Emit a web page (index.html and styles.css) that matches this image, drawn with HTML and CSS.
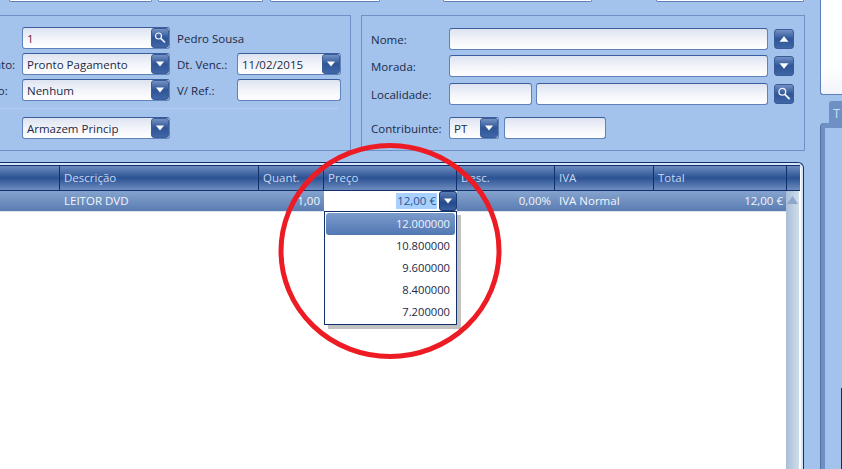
FILE: index.html
```html
<!DOCTYPE html>
<html lang="pt">
<head>
    <meta charset="UTF-8">
    <title>Documento de venda</title>
    <link rel="stylesheet" href="styles.css">
</head>
<body>
<div id="app">
    <div class="main">
        <div class="toolbar">
            <span class="tool t1"></span>
            <span class="tool t2"></span>
            <span class="tool t3"></span>
            <span class="tool t4"></span>
            <span class="tool t5"></span>
        </div>

        <div class="panels">
            <div class="panel panel-doc">
                <div class="doc-grid">
                    <span class="lbl"></span>
                    <div class="field"><span class="val val-id">1</span><span class="btn"><svg viewBox="0 0 16 16"><use href="#i-search"/></svg></span></div>
                    <span class="lbl lbl-name">Pedro Sousa</span>

                    <span class="lbl lbl-pay">Pagamento:</span>
                    <div class="field"><span class="val">Pronto Pagamento</span><span class="btn"><svg viewBox="0 0 16 16"><use href="#i-down"/></svg></span></div>
                    <span class="lbl lbl-mid">Dt. Venc.:</span>
                    <div class="field"><span class="val">11/02/2015</span><span class="btn"><svg viewBox="0 0 16 16"><use href="#i-down"/></svg></span></div>

                    <span class="lbl">Desconto:</span>
                    <div class="field"><span class="val">Nenhum</span><span class="btn"><svg viewBox="0 0 16 16"><use href="#i-down"/></svg></span></div>
                    <span class="lbl lbl-mid">V/ Ref.:</span>
                    <div class="field"></div>
                </div>
                <div class="sep"></div>
                <div class="doc-grid">
                    <span class="lbl"></span>
                    <div class="field"><span class="val">Armazem Princip</span><span class="btn"><svg viewBox="0 0 16 16"><use href="#i-down"/></svg></span></div>
                </div>
            </div>

            <div class="panel panel-client">
                <div class="client-row">
                    <span class="lbl">Nome:</span>
                    <div class="field grow"></div>
                    <span class="btn btn-side"><svg viewBox="0 0 16 16"><use href="#i-up"/></svg></span>
                </div>
                <div class="client-row">
                    <span class="lbl">Morada:</span>
                    <div class="field grow"></div>
                    <span class="btn btn-side"><svg viewBox="0 0 16 16"><use href="#i-down"/></svg></span>
                </div>
                <div class="client-row row-local">
                    <span class="lbl">Localidade:</span>
                    <div class="field cp"></div>
                    <div class="field grow"></div>
                    <span class="btn btn-side"><svg viewBox="0 0 16 16"><use href="#i-search"/></svg></span>
                </div>
                <div class="client-row row-nif">
                    <span class="lbl">Contribuinte:</span>
                    <div class="field country"><span class="val">PT</span><span class="btn"><svg viewBox="0 0 16 16"><use href="#i-down"/></svg></span></div>
                    <div class="field nif"></div>
                </div>
            </div>
        </div>

        <div class="table">
            <div class="thead cols">
                <div class="th"></div>
                <div class="th">Descrição</div>
                <div class="th">Quant.</div>
                <div class="th">Preço</div>
                <div class="th">Desc.</div>
                <div class="th">IVA</div>
                <div class="th">Total</div>
                <div class="th"></div>
            </div>
            <div class="tbody">
                <div class="rows">
                    <div class="tr cols">
                        <div class="td"></div>
                        <div class="td">LEITOR DVD</div>
                        <div class="td num">1,00</div>
                        <div class="td td-edit">
                            <span class="sel">12,00 €</span>
                            <span class="btn"><svg viewBox="0 0 16 16"><use href="#i-down"/></svg></span>
                            <ul class="dropdown">
                                <li class="on">12.000000</li>
                                <li>10.800000</li>
                                <li>9.600000</li>
                                <li>8.400000</li>
                                <li>7.200000</li>
                            </ul>
                        </div>
                        <div class="td num">0,00%</div>
                        <div class="td">IVA Normal</div>
                        <div class="td num">12,00 €</div>
                    </div>
                </div>
                <div class="scrollbar"><svg viewBox="0 0 13 10"><path d="M6.500 1 L12 9 H1 Z"/></svg></div>
            </div>
        </div>
    </div>

    <div class="side">
        <div class="side-top"></div>
        <div class="tab">T</div>
        <div class="tab-page"><div class="page-edge"></div></div>
    </div>

    <svg class="circle" viewBox="0 0 842 469"><ellipse cx="390" cy="251" rx="109" ry="105.500"/></svg>
</div>

<svg class="defs" width="0" height="0">
    <symbol id="i-down" viewBox="0 0 16 16"><path d="M4 5.500 H12 L8 10.500 Z" fill="#fff"/></symbol>
    <symbol id="i-up" viewBox="0 0 16 16"><path d="M4 10.500 H12 L8 5.500 Z" fill="#fff"/></symbol>
    <symbol id="i-search" viewBox="0 0 16 16"><circle cx="6.500" cy="6" r="3" fill="none" stroke="#eef2fa" stroke-width="1.200"/><path d="M8.800 8.300 L13 12.500" stroke="#eef2fa" stroke-width="1.700"/></symbol>
</svg>
</body>
</html>
```

FILE: styles.css
```css
* {
    margin: 0;
    padding: 0;
    box-sizing: border-box;
}

html, body {
    width: 842px;
    height: 469px;
    overflow: hidden;
}

body {
    background-color: #a3c2ec;
    font-family: "Open Sans", "Noto Sans", sans-serif;
    font-size: 11.5px;
    color: #1c2a47;
}

#app {
    position: relative;
    display: flex;
    width: 842px;
    height: 469px;
    overflow: hidden;
}

.defs {
    position: absolute;
}

.main {
    width: 820px;
    flex: none;
}

/* toolbar, only the bottom of it is in view */
.toolbar {
    display: flex;
    height: 15px;
}

.tool {
    height: 2px;
    background-color: #fff;
    border: 1px solid #5c7fb8;
    border-top: 0;
    border-radius: 0 0 2px 2px;
}

.t1 { width: 143px; margin-left: 9px; }
.t2 { width: 105px; margin-left: 6px; }
.t3 { width: 110px; margin-left: 7px; }
.t4 { width: 149px; margin-left: 63px; }
.t5 { width: 148px; margin-left: 64px; }

.panels {
    display: flex;
    gap: 10px;
    margin-left: -60px;
}

.panel {
    height: 136px;
    border: 1px solid #6d90c6;
}

.panel-doc {
    width: 411px;
    padding: 11px 0 0 13px;
}

.panel-client {
    width: 444px;
    padding: 12px 0 0 9px;
}

.doc-grid {
    display: grid;
    grid-template-columns: 68px 148px 67px 104px;
    grid-auto-rows: 22px;
    row-gap: 4px;
    align-items: center;
}

.lbl-name {
    grid-column: 3 / span 2;
    padding-left: 7px;
}

.lbl-mid {
    padding-left: 7px;
}

.lbl-pay {
    margin-left: -3px;
}

.sep {
    width: 384px;
    height: 1px;
    margin: 7px 0 8px;
    background-color: #b4cdf0;
}

.lbl {
    white-space: nowrap;
}

.field {
    display: flex;
    align-items: center;
    justify-content: space-between;
    height: 22px;
    background: linear-gradient(#dde3f0, #f3f5fa 55%, #fff);
    border: 1px solid #5f82b9;
    border-top-color: #3b5d9b;
    border-radius: 3px;
}

.val {
    padding-left: 4px;
    white-space: nowrap;
}

.val-id {
    color: #6a1f3c;
}

.btn {
    display: block;
    flex: none;
    width: 18px;
    height: 20px;
    background: linear-gradient(#7391c4, #2f5596 50%, #3f66a6);
    border: 1px solid #3a5c98;
    border-radius: 3px;
}

.btn svg {
    display: block;
    width: 100%;
    height: 100%;
}

.client-row {
    display: flex;
    align-items: center;
    margin-bottom: 5px;
}

.row-local {
    margin-top: 6px;
}

.client-row .lbl {
    width: 78px;
    flex: none;
}

.client-row .grow {
    flex: none;
    width: 319px;
}

.client-row .cp {
    width: 83px;
    margin-right: 4px;
}

.client-row .cp + .grow {
    width: 232px;
}

.btn-side {
    width: 20px;
    margin-left: 6px;
}

.row-nif {
    margin-top: 12px;
}

.country {
    width: 50px;
}

.nif {
    width: 102px;
    margin-left: 5px;
}

/* grid of document lines */
.table {
    width: 804px;
    height: 320px;
    margin-top: 11px;
    padding: 2px 3px 0 0;
    background-color: #fff;
    border: 1px solid #12306a;
    border-left: 0;
    border-bottom: 0;
    border-radius: 0 6px 0 0;
    box-shadow: inset -2px 2px 0 #d5e4f8;
}

.cols {
    display: grid;
    grid-template-columns: 60px 199px 65px 133px 98px 99px 133px 13px;
}

.thead {
    height: 26px;
    background: linear-gradient(#6c8cc0, #2c5293 50%, #6d8dc0);
    border-top: 1px solid #12306a;
    border-bottom: 1px solid #12306a;
    color: #c6d9f5;
}

.th {
    padding: 4px 0 0 4px;
    border-right: 1px solid #12306a;
    white-space: nowrap;
}

.th:last-child {
    border-right: 0;
}

.tbody {
    display: flex;
    height: 290px;
}

.rows {
    width: 786px;
    flex: none;
}

.tr {
    height: 21px;
    background: linear-gradient(#84a3ce, #5a7cb2);
    border-bottom: 1px solid #dfe6f1;
    color: #f2f6fd;
}

.td {
    padding: 2px 4px 0 4px;
    white-space: nowrap;
}

.num {
    text-align: right;
}

.td-edit {
    position: relative;
    display: flex;
    justify-content: flex-end;
    align-items: flex-start;
    gap: 2px;
    padding: 0;
    background-color: #fff;
    color: #2a5690;
}

.sel {
    height: 16px;
    margin-top: 2px;
    padding: 0 1px;
    background-color: #a8d1ff;
}

.td-edit .btn {
    width: 18px;
    height: 20px;
    background: linear-gradient(#5b7db5, #25498a 60%, #3a5f9f);
    border-color: #1b3b78;
}

.dropdown {
    position: absolute;
    z-index: 2;
    top: 20px;
    left: 0;
    width: 133px;
    height: 114px;
    list-style: none;
    padding: 1px;
    background-color: #fff;
    border: 1px solid #12306a;
    box-shadow: 4px 4px 0 #c2c2c2;
    color: #1c2a47;
    font-size: 11.2px;
}

.dropdown li {
    height: 22px;
    padding-right: 5px;
    line-height: 22px;
    text-align: right;
}

.dropdown .on {
    background: linear-gradient(#7b9bcc, #5277b3);
    border-radius: 3px;
    color: #eef4fd;
}

.scrollbar {
    width: 13px;
    flex: none;
    background: linear-gradient(90deg, #a9bed8, #cfdde9);
}

.scrollbar svg {
    display: block;
    width: 13px;
    height: 10px;
    margin-top: 4px;
}

.scrollbar path {
    fill: #8ea6ca;
}

/* right hand column */
.side {
    flex: 1;
    min-width: 0;
}

.side-top {
    height: 95px;
    background: linear-gradient(#fff 70%, #f1f4fb);
    border: 1px solid #5c7fb8;
    border-top: 0;
    border-right: 0;
    border-radius: 0 0 0 3px;
}

.tab {
    width: 13px;
    height: 22px;
    margin: 6px 0 0 9px;
    padding: 3px 0 0 4px;
    overflow: hidden;
    background-color: #6f90c4;
    border-radius: 3px 0 0 0;
    color: #bfe0ff;
    font-size: 13px;
}

.tab-page {
    height: 347px;
    margin-left: 1px;
    padding-top: 260px;
    background-color: #a3c2ec;
    border-left: 4px solid #6f90c4;
    border-top: 5px solid #6f90c4;
    border-radius: 4px 0 0 0;
    box-shadow: -1px 0 0 #54749f;
}

.page-edge {
    height: 82px;
    border-right: 1px solid #12306a;
}

.circle {
    position: absolute;
    z-index: 5;
    left: 0;
    top: 0;
    width: 842px;
    height: 469px;
    pointer-events: none;
}

.circle ellipse {
    fill: none;
    stroke: #ed1c24;
    stroke-width: 5;
}
```
